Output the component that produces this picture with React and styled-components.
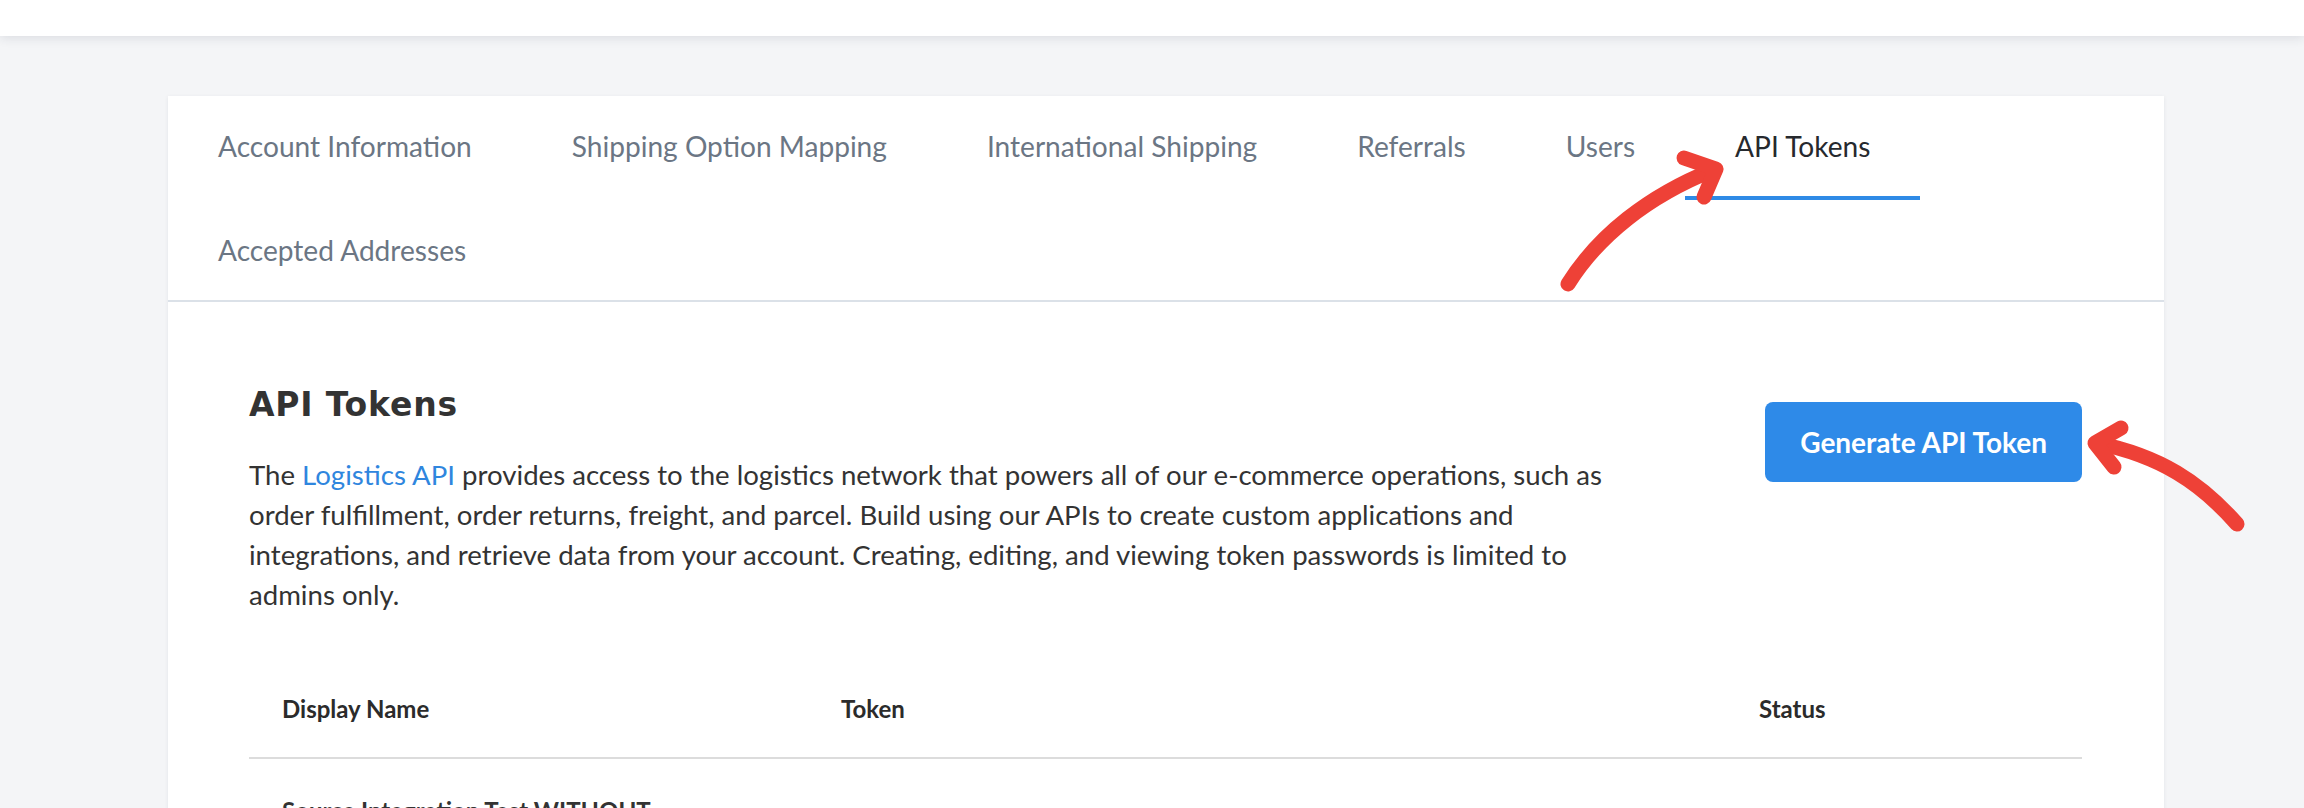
import React from 'react';
import styled, { createGlobalStyle } from 'styled-components';

const tabs = [
  'Account Information',
  'Shipping Option Mapping',
  'International Shipping',
  'Referrals',
  'Users',
  'API Tokens',
  'Accepted Addresses',
];

const App = () => {
  return (
    <Page>
      <GlobalStyle />
      <TopBar />
      <Card>
        <TabBar>
          <TabList>
            {tabs.map((t) => (
              <Tab key={t} active={t === 'API Tokens'}>
                {t}
              </Tab>
            ))}
          </TabList>
        </TabBar>
        <Body>
          <IntroRow>
            <Intro>
              <Title>API Tokens</Title>
              <Description>
                The <Link>Logistics API</Link> provides access to the logistics network that
                powers all of our e-commerce operations, such as order fulfillment, order
                returns, freight, and parcel. Build using our APIs to create custom applications
                and integrations, and retrieve data from your account. Creating, editing, and
                viewing token passwords is limited to admins only.
              </Description>
            </Intro>
            <PrimaryButton>Generate API Token</PrimaryButton>
          </IntroRow>
          <Table>
            <HeadRow>
              <HeadCell>Display Name</HeadCell>
              <HeadCell>Token</HeadCell>
              <HeadCell>Status</HeadCell>
            </HeadRow>
            <Row>
              <Cell>Source Integration Test WITHOUT PERMISSIONS</Cell>
              <Cell />
              <Cell />
            </Row>
          </Table>
        </Body>
      </Card>
      <Annotations viewBox="0 0 2304 808" width="2304" height="808">
        <g fill="none" stroke="#ee4137" strokeWidth="15" strokeLinecap="round" strokeLinejoin="round">
          <path d="M1568 284 C1598 236, 1648 196, 1713 170" />
          <path d="M1684 158 L1716 169 L1704 197" />
          <path d="M2237 524 C2200 482, 2160 456, 2097 443" />
          <path d="M2121 428 L2095 443 L2114 467" />
        </g>
      </Annotations>
    </Page>
  );
};

const GlobalStyle = createGlobalStyle`
  html, body {
    margin: 0;
    padding: 0;
    background: #f4f5f7;
    overflow: hidden;
  }
  * {
    box-sizing: border-box;
  }
`;

const Page = styled.div`
  position: relative;
  width: 2304px;
  height: 808px;
  overflow: hidden;
  background: #f4f5f7;
  font-family: Lato, "Open Sans", sans-serif;
`;

const TopBar = styled.div`
  height: 36px;
  background: #ffffff;
  box-shadow: 0 2px 10px rgba(40, 50, 70, 0.12);
  position: relative;
  z-index: 1;
`;

const Card = styled.div`
  margin: 60px 140px 0 168px;
  background: #ffffff;
  box-shadow: 0 1px 4px rgba(30, 40, 60, 0.08);
`;

const TabBar = styled.div`
  border-bottom: 2px solid #dbe1e8;
`;

const TabList = styled.div`
  display: flex;
  flex-wrap: wrap;
  margin-bottom: -4px;
`;

const Tab = styled.div`
  height: 104px;
  display: flex;
  align-items: center;
  padding: 0 50px;
  border-bottom: 4px solid ${(p) => (p.active ? '#2e8ae6' : 'transparent')};
  font-size: 28.1px;
  color: ${(p) => (p.active ? '#26292e' : '#6b7684')};
  white-space: nowrap;
`;

const Body = styled.div`
  padding: 83px 82px 0 81px;
`;

const IntroRow = styled.div`
  display: flex;
  align-items: flex-start;
  justify-content: space-between;
`;

const Intro = styled.div`
  max-width: 1395px;
`;

const Title = styled.h2`
  margin: 0;
  font-family: "DejaVu Sans", Inter, sans-serif;
  font-weight: 700;
  font-size: 33px;
  letter-spacing: 0.8px;
  line-height: 40px;
  color: #333333;
`;

const Description = styled.p`
  margin: 30px 0 0;
  font-size: 27.6px;
  line-height: 40px;
  color: #333333;
`;

const Link = styled.span`
  color: #2f86de;
`;

const PrimaryButton = styled.button`
  flex: none;
  margin-top: 17px;
  height: 80px;
  padding: 0 35px;
  border: none;
  border-radius: 8px;
  background: #2e8ae8;
  color: #ffffff;
  font-family: Lato, sans-serif;
  font-weight: 700;
  font-size: 28px;
`;

const Table = styled.div`
  margin-top: 46px;
`;

const HeadRow = styled.div`
  display: grid;
  grid-template-columns: 559px 918px 1fr;
  padding: 32px 0;
  border-bottom: 2px solid #dcdcdc;
`;

const Row = styled(HeadRow)`
  padding-top: 36px;
  border-bottom: none;
`;

const HeadCell = styled.div`
  padding: 0 33px;
  font-weight: 700;
  font-size: 24px;
  line-height: 32px;
  color: #2b2b2b;
`;

const Cell = styled(HeadCell)`
  color: #333333;
`;

const Annotations = styled.svg`
  position: absolute;
  top: 0;
  left: 0;
  pointer-events: none;
  z-index: 2;
`;

export default App;
